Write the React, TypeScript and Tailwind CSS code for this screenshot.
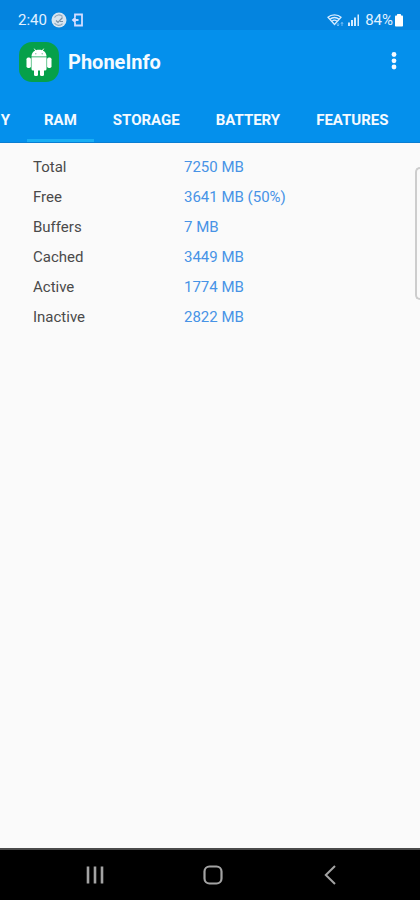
import { useState } from "react";

const tabs = ["RAM", "STORAGE", "BATTERY", "FEATURES"];

const rows = [
  { label: "Total", value: "7250 MB" },
  { label: "Free", value: "3641 MB (50%)" },
  { label: "Buffers", value: "7 MB" },
  { label: "Cached", value: "3449 MB" },
  { label: "Active", value: "1774 MB" },
  { label: "Inactive", value: "2822 MB" },
];

function StatusBar() {
  return (
    <div className="flex h-[30px] items-center justify-between bg-[#0484df] pt-[10px] pr-4 pl-[18px] text-[15px] leading-5 text-[#e2f1ff]">
      <div className="flex items-center gap-1">
        <span>2:40</span>
        <svg viewBox="0 0 16 16" className="size-4" aria-hidden="true">
          <circle cx="8" cy="8" r="7.5" fill="#d7e4ef" />
          <path d="M3.5 5.5a5 5 0 0 1 8-1M3.5 11a5 5 0 0 0 8 .6" fill="none" stroke="#8fa7bb" strokeWidth="1.2" />
          <path d="M5 8.500l2 2 4.500-5M9 9.500h3" fill="none" stroke="#7790a6" strokeWidth="1.2" />
        </svg>
        <svg viewBox="0 0 13 14" className="h-[14px] w-[13px]" fill="none" stroke="#d3dcff" strokeWidth="1.800" aria-hidden="true">
          <path d="M4 4.500V1.500h7v11H4V9.500M1.500 7h6M4.500 4.800L2 7l2.500 2.200" />
        </svg>
      </div>
      <div className="flex items-center">
        <svg viewBox="0 0 18 14" className="h-[14px] w-[18px]" aria-hidden="true">
          <g fill="none" stroke="#d6ebff" strokeWidth="1.300">
            <path d="M1 4.200C4.200 1 10.800 1 14 4.200L7.500 11.500z" />
            <path d="M3 6.200c2.500-2.300 6.500-2.300 9 0M5 8.200c1.500-1.300 3.500-1.300 5 0" />
          </g>
          <path d="M11 10v3M10 11.500l1 1.500 1-1.500M15 13v-3.500M14 10.800l1-1.500 1 1.500" fill="none" stroke="#8cc8fa" strokeWidth="0.800" />
        </svg>
        <svg viewBox="0 0 14 12" className="mr-1 ml-[2px] h-3 w-[14px]" fill="#d6ebff" aria-hidden="true">
          <rect x="1" y="8.500" width="2" height="3.500" />
          <rect x="4" y="6" width="2" height="6" />
          <rect x="7" y="3.500" width="2" height="8.500" />
          <rect x="10.500" y="0.500" width="1.500" height="11.500" />
        </svg>
        <span>84%</span>
        <svg viewBox="0 0 10 13" className="ml-px h-[13px] w-[10px]" fill="#fff" aria-hidden="true">
          <rect x="3" y="0" width="4" height="3" rx="0.500" />
          <rect x="1" y="1.500" width="8" height="11" rx="0.800" />
        </svg>
      </div>
    </div>
  );
}

function AppLogo() {
  return (
    <svg viewBox="0 0 40 40" className="size-10" aria-hidden="true">
      <rect width="40" height="40" rx="13" fill="#06a04a" />
      <g fill="#fff">
        <path d="M12.500 14.500c0-4 3.200-6.700 7.500-6.700s7.500 2.700 7.500 6.700z" />
        <path d="M15.500 7l2 3M24.500 7l-2 3" stroke="#fff" strokeWidth="1" strokeLinecap="round" />
        <path d="M12.500 15.300h15V27a1.500 1.500 0 0 1-1.500 1.500H14a1.500 1.500 0 0 1-1.500-1.500z" />
        <rect x="7.500" y="15.500" width="4.400" height="10.500" rx="1.700" />
        <rect x="28.100" y="15.500" width="4.400" height="10.500" rx="1.700" />
        <rect x="15" y="26" width="4" height="8" rx="1.500" />
        <rect x="21" y="26" width="4" height="8" rx="1.500" />
      </g>
      <circle cx="16.800" cy="11.800" r="0.700" fill="#7cc49c" />
      <circle cx="23.200" cy="11.800" r="0.700" fill="#7cc49c" />
    </svg>
  );
}

function NavBar() {
  return (
    <nav aria-label="System" className="flex h-[52px] items-center justify-between border-t-2 border-[#4b4b4b] bg-black pr-[72px] pl-[77px] text-[#a3a3a3]">
      <button aria-label="Recent apps" className="flex w-9 justify-center">
        <svg viewBox="0 0 20 20" className="size-5" fill="none" stroke="currentColor" strokeWidth="2.600">
          <path d="M3 1.500v17M10 1.500v17M17 1.500v17" />
        </svg>
      </button>
      <button aria-label="Home" className="flex w-9 justify-center">
        <svg viewBox="0 0 20 20" className="size-5" fill="none" stroke="currentColor" strokeWidth="2.200">
          <rect x="1.500" y="1.500" width="17" height="17" rx="5" />
        </svg>
      </button>
      <button aria-label="Back" className="flex w-9 justify-center">
        <svg viewBox="0 0 12 20" className="h-5 w-3" fill="none" stroke="currentColor" strokeWidth="2">
          <path d="M11 1L1.800 10 11 19" />
        </svg>
      </button>
    </nav>
  );
}

export default function App() {
  const [active, setActive] = useState("RAM");

  return (
    <div className="flex min-h-screen flex-col bg-[#fafafa] font-['Roboto',sans-serif]">
      <StatusBar />
      <header className="border-b border-[#0a7ed2] bg-[#0490ec] text-[#f4faff]">
        <div className="flex h-16 items-center pr-4 pl-[19px]">
          <AppLogo />
          <h1 className="ml-[9px] flex-1 text-[20px] leading-6 font-bold">PhoneInfo</h1>
          <button aria-label="More options" className="flex w-5 justify-center">
            <svg viewBox="0 0 6 20" className="h-5 w-[6px]" fill="currentColor">
              <circle cx="3" cy="2.500" r="2.400" />
              <circle cx="3" cy="8.800" r="2.400" />
              <circle cx="3" cy="15" r="2.400" />
            </svg>
          </button>
        </div>
        <div role="tablist" className="flex h-12 gap-[2px] overflow-hidden text-[15px] leading-5 font-bold">
          <button role="tab" aria-selected={false} className="w-[25px] shrink-0 pt-[3px] pr-[15px] text-right">
            Y
          </button>
          {tabs.map((tab) => (
            <button
              key={tab}
              role="tab"
              aria-selected={tab === active}
              onClick={() => setActive(tab)}
              className={`shrink-0 border-b-3 px-[17px] pt-[6px] ${tab === active ? "border-[#18aef4]" : "border-transparent"}`}
            >
              {tab}
            </button>
          ))}
        </div>
      </header>
      <main className="relative flex-1 pt-[9px] pl-[33px]">
        <table className="text-left text-[15px] leading-[30px]">
          <tbody>
            {rows.map((row) => (
              <tr key={row.label}>
                <th scope="row" className="w-[151px] p-0 font-normal text-[#4a4a4a]">
                  {row.label}
                </th>
                <td className="p-0 text-[#4793e6]">{row.value}</td>
              </tr>
            ))}
          </tbody>
        </table>
        <div className="absolute top-6 right-0 h-[133px] w-[5px] rounded-l-[5px] border-2 border-r-0 border-[#cdcdcd]" />
      </main>
      <NavBar />
    </div>
  );
}
